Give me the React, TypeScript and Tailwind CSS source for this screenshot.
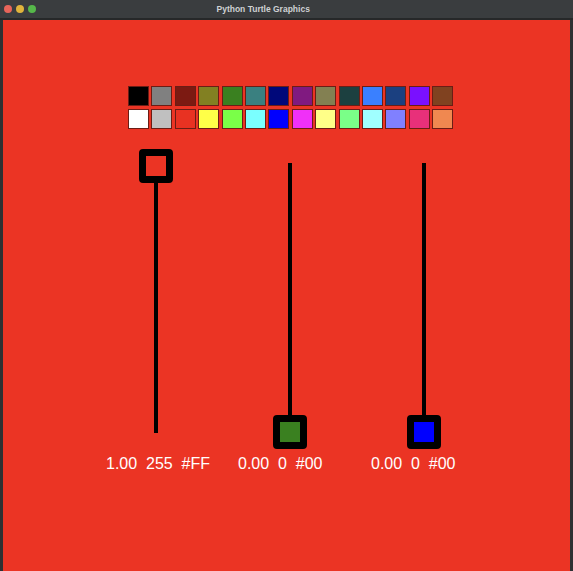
import React from 'react';

const topRow = ['#000000', '#808080', '#7c1a12', '#828022', '#3a8020', '#3a8080', '#00087a', '#801a80', '#838052', '#1c4040', '#3a80ff', '#1b4080', '#7a10ff', '#804220'];
const bottomRow = ['#ffffff', '#c0c0c0', '#e83222', '#ffff48', '#7aff48', '#7affff', '#0000ff', '#f030f8', '#ffff88', '#7aff88', '#a0ffff', '#8080ff', '#e8307a', '#f08850'];

interface SliderProps {
    atTop: boolean;
    fill: string;
    label: string;
    labelPad: string;
}

const Slider: React.FC<SliderProps> = ({ atTop, fill, label, labelPad }) => (
    <div className="flex w-[134px] flex-col">
        <div className="relative h-[300px] w-full">
            <div className="mx-auto mt-[14px] h-[270px] w-[4px] bg-black" />
            <div
                className={`absolute left-[50px] h-[34px] w-[34px] rounded-[4px] border-[7px] border-black ${atTop ? 'top-0' : 'top-[266px]'}`}
                style={{ backgroundColor: fill }}
            />
        </div>
        <div className={`mt-[6px] whitespace-pre text-[16px] leading-[18px] text-white ${labelPad}`}>{label}</div>
    </div>
);

export default function App() {
    return (
        <div className="flex h-[571px] w-[573px] flex-col bg-[#2e3032] font-['Liberation_Sans',Arial,sans-serif]">
            {/* title bar */}
            <div className="relative flex h-[18px] items-center bg-[#3a3d3f]">
                <div className="ml-[4px] flex gap-[4.5px]">
                    <span className="h-[7.5px] w-[7.5px] rounded-full bg-[#e8655a]" />
                    <span className="h-[7.5px] w-[7.5px] rounded-full bg-[#e0b43c]" />
                    <span className="h-[7.5px] w-[7.5px] rounded-full bg-[#56b84a]" />
                </div>
                <div className="ml-[181px] text-[8.5px] font-bold text-[#cfd1d3]">Python Turtle Graphics</div>
            </div>
            <div className="h-[2px] bg-[#262829]" />

            {/* canvas */}
            <div className="mx-[3px] flex flex-1 flex-col bg-[#eb3424]">
                <div className="ml-[125px] mt-[66px] flex flex-col gap-[3px]">
                    {[topRow, bottomRow].map((row, r) => (
                        <div key={r} className="flex gap-[2.4px]">
                            {row.map((c, i) => (
                                <div key={i} className="h-[20px] w-[21px] border border-[#6b1d15]" style={{ backgroundColor: c }} />
                            ))}
                        </div>
                    ))}
                </div>

                <div className="ml-[86px] mt-[20px] flex">
                    <Slider atTop fill="#eb3424" label="1.00  255  #FF" labelPad="pl-[17px]" />
                    <Slider atTop={false} fill="#3a8020" label="0.00  0  #00" labelPad="pl-[15px]" />
                    <Slider atTop={false} fill="#0000ff" label="0.00  0  #00" labelPad="pl-[14px]" />
                </div>
            </div>
        </div>
    );
}
